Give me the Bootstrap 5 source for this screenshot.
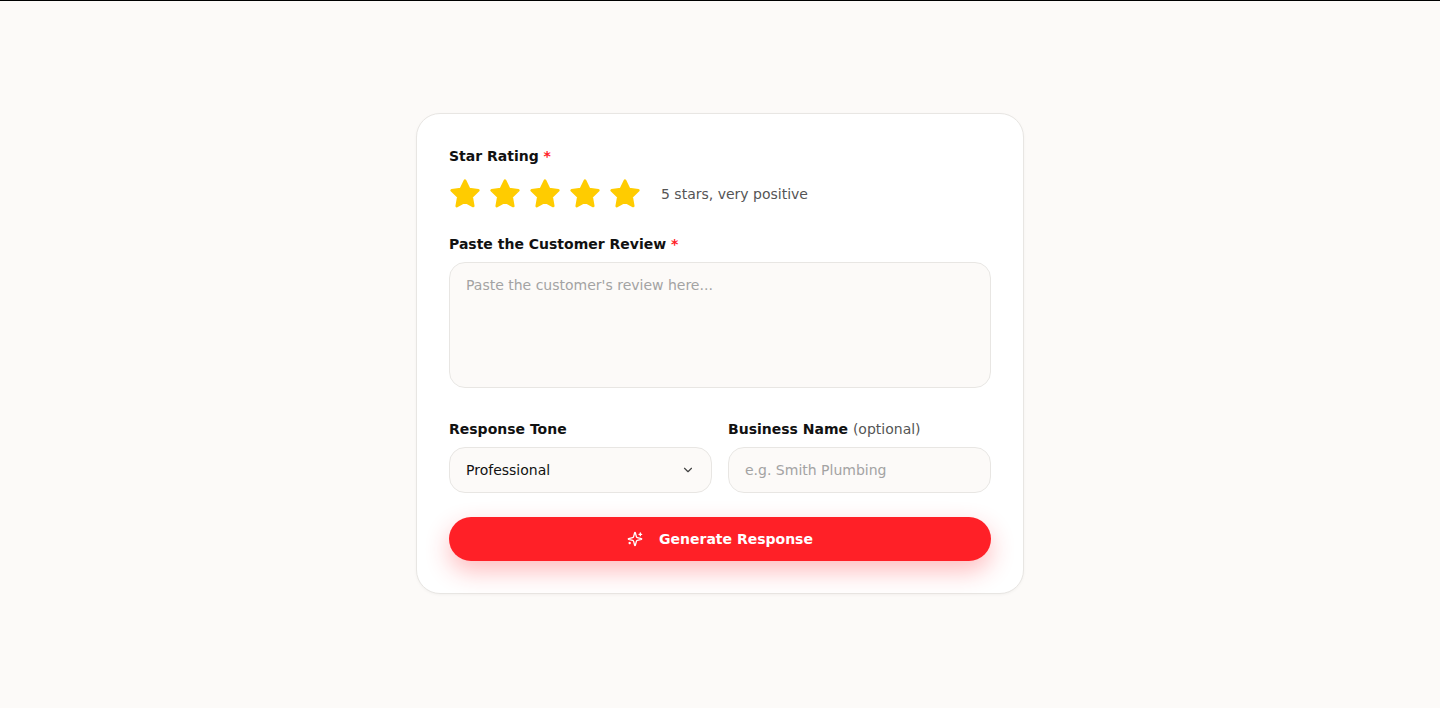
<!DOCTYPE html>
<html lang="en">
<head>
<meta charset="utf-8">
<title>Review Response</title>
<link href="https://cdn.jsdelivr.net/npm/bootstrap@5.3.0/dist/css/bootstrap.min.css" rel="stylesheet">
<style>
html,body{height:100%}
body{background:#fcfaf8;border-top:1px solid #000;font-family:"DejaVu Sans",sans-serif;color:#111;font-size:14px;overflow:hidden}
.shell{height:705px}
.panel{width:608px;height:481px;background:#fff;border:1px solid #e8e6e3;border-radius:24px;padding:32px;box-shadow:0 1px 3px rgba(0,0,0,.04)}
.lbl{font-size:14px;font-weight:700;line-height:20px;color:#111;margin:0 0 8px;display:block}
.req{color:#ff2027}
.opt{font-weight:400;color:#555}
.star{width:32px;height:32px;display:block}
.stars{height:32px;margin-bottom:24px;margin-top:12px}
.rate-note{font-size:14px;color:#555;margin-left:20px}
.fld{background-color:#fcfaf8;border:1px solid #e8e6e3;border-radius:16px;font-size:14px;color:#111;padding:12px 16px;box-shadow:none}
.fld::placeholder{color:#a3a3a3;opacity:1}
.fld:focus{background-color:#fcfaf8;border-color:#e8e6e3;box-shadow:none}
textarea.fld{height:126px;resize:none;line-height:20px;margin-bottom:31px}
.ctl{height:46px}
select.fld{background-image:url("data:image/svg+xml,%3Csvg xmlns='http://www.w3.org/2000/svg' viewBox='0 0 24 24' fill='none' stroke='%23444' stroke-width='2' stroke-linecap='round' stroke-linejoin='round'%3E%3Cpath d='m6 9 6 6 6-6'/%3E%3C/svg%3E");background-position:right 16px center;background-size:14px 14px;padding-right:40px}
.gen{height:44px;background:#ff2027;color:#fff;border:0;border-radius:22px;font-size:14px;font-weight:700;box-shadow:0 10px 24px rgba(255,32,39,.3);margin-top:24px;gap:16px}
.gen:hover,.gen:active{background:#ff2027!important;color:#fff!important}
.pair{--bs-gutter-x:16px;--bs-gutter-y:0}
</style>
</head>
<body>
<main class="shell d-flex align-items-center justify-content-center">
<form class="panel">
<label class="lbl">Star Rating <span class="req">*</span></label>
<div class="stars d-flex align-items-center">
<div class="d-flex gap-2">
<svg class="star" viewBox="0 0 24 24" fill="#ffcc00" stroke="#ffcc00" stroke-width="2" stroke-linejoin="round"><path d="M12 2l3.09 6.26L22 9.27l-5 4.87 1.18 6.88L12 17.77l-6.18 3.25L7 14.14 2 9.27l6.91-1.01L12 2z"/></svg>
<svg class="star" viewBox="0 0 24 24" fill="#ffcc00" stroke="#ffcc00" stroke-width="2" stroke-linejoin="round"><path d="M12 2l3.09 6.26L22 9.27l-5 4.87 1.18 6.88L12 17.77l-6.18 3.25L7 14.14 2 9.27l6.91-1.01L12 2z"/></svg>
<svg class="star" viewBox="0 0 24 24" fill="#ffcc00" stroke="#ffcc00" stroke-width="2" stroke-linejoin="round"><path d="M12 2l3.09 6.26L22 9.27l-5 4.87 1.18 6.88L12 17.77l-6.18 3.25L7 14.14 2 9.27l6.91-1.01L12 2z"/></svg>
<svg class="star" viewBox="0 0 24 24" fill="#ffcc00" stroke="#ffcc00" stroke-width="2" stroke-linejoin="round"><path d="M12 2l3.09 6.26L22 9.27l-5 4.87 1.18 6.88L12 17.77l-6.18 3.25L7 14.14 2 9.27l6.91-1.01L12 2z"/></svg>
<svg class="star" viewBox="0 0 24 24" fill="#ffcc00" stroke="#ffcc00" stroke-width="2" stroke-linejoin="round"><path d="M12 2l3.09 6.26L22 9.27l-5 4.87 1.18 6.88L12 17.77l-6.18 3.25L7 14.14 2 9.27l6.91-1.01L12 2z"/></svg>
</div>
<span class="rate-note">5 stars, very positive</span>
</div>
<label class="lbl" for="rv">Paste the Customer Review <span class="req">*</span></label>
<textarea id="rv" class="form-control fld" placeholder="Paste the customer's review here..."></textarea>
<div class="row pair">
<div class="col-6">
<label class="lbl" for="tn">Response Tone</label>
<select id="tn" class="form-select fld ctl"><option>Professional</option></select>
</div>
<div class="col-6">
<label class="lbl" for="bn">Business Name <span class="opt">(optional)</span></label>
<input id="bn" class="form-control fld ctl" placeholder="e.g. Smith Plumbing">
</div>
</div>
<button type="button" class="btn gen w-100 d-flex align-items-center justify-content-center">
<svg width="16" height="16" viewBox="0 0 24 24" fill="none" stroke="#fff" stroke-width="2" stroke-linecap="round" stroke-linejoin="round"><path d="M9.94 15.5A2 2 0 0 0 8.5 14.06l-6.14-1.58a.5.5 0 0 1 0-.96L8.5 9.94A2 2 0 0 0 9.94 8.5l1.58-6.14a.5.5 0 0 1 .96 0l1.58 6.14a2 2 0 0 0 1.44 1.44l6.14 1.58a.5.5 0 0 1 0 .96l-6.14 1.58a2 2 0 0 0-1.44 1.44l-1.58 6.14a.5.5 0 0 1-.96 0z"/><path d="M20 3v4M22 5h-4M4 17v2M5 18H3"/></svg>
<span>Generate Response</span>
</button>
</form>
</main>
</body>
</html>
